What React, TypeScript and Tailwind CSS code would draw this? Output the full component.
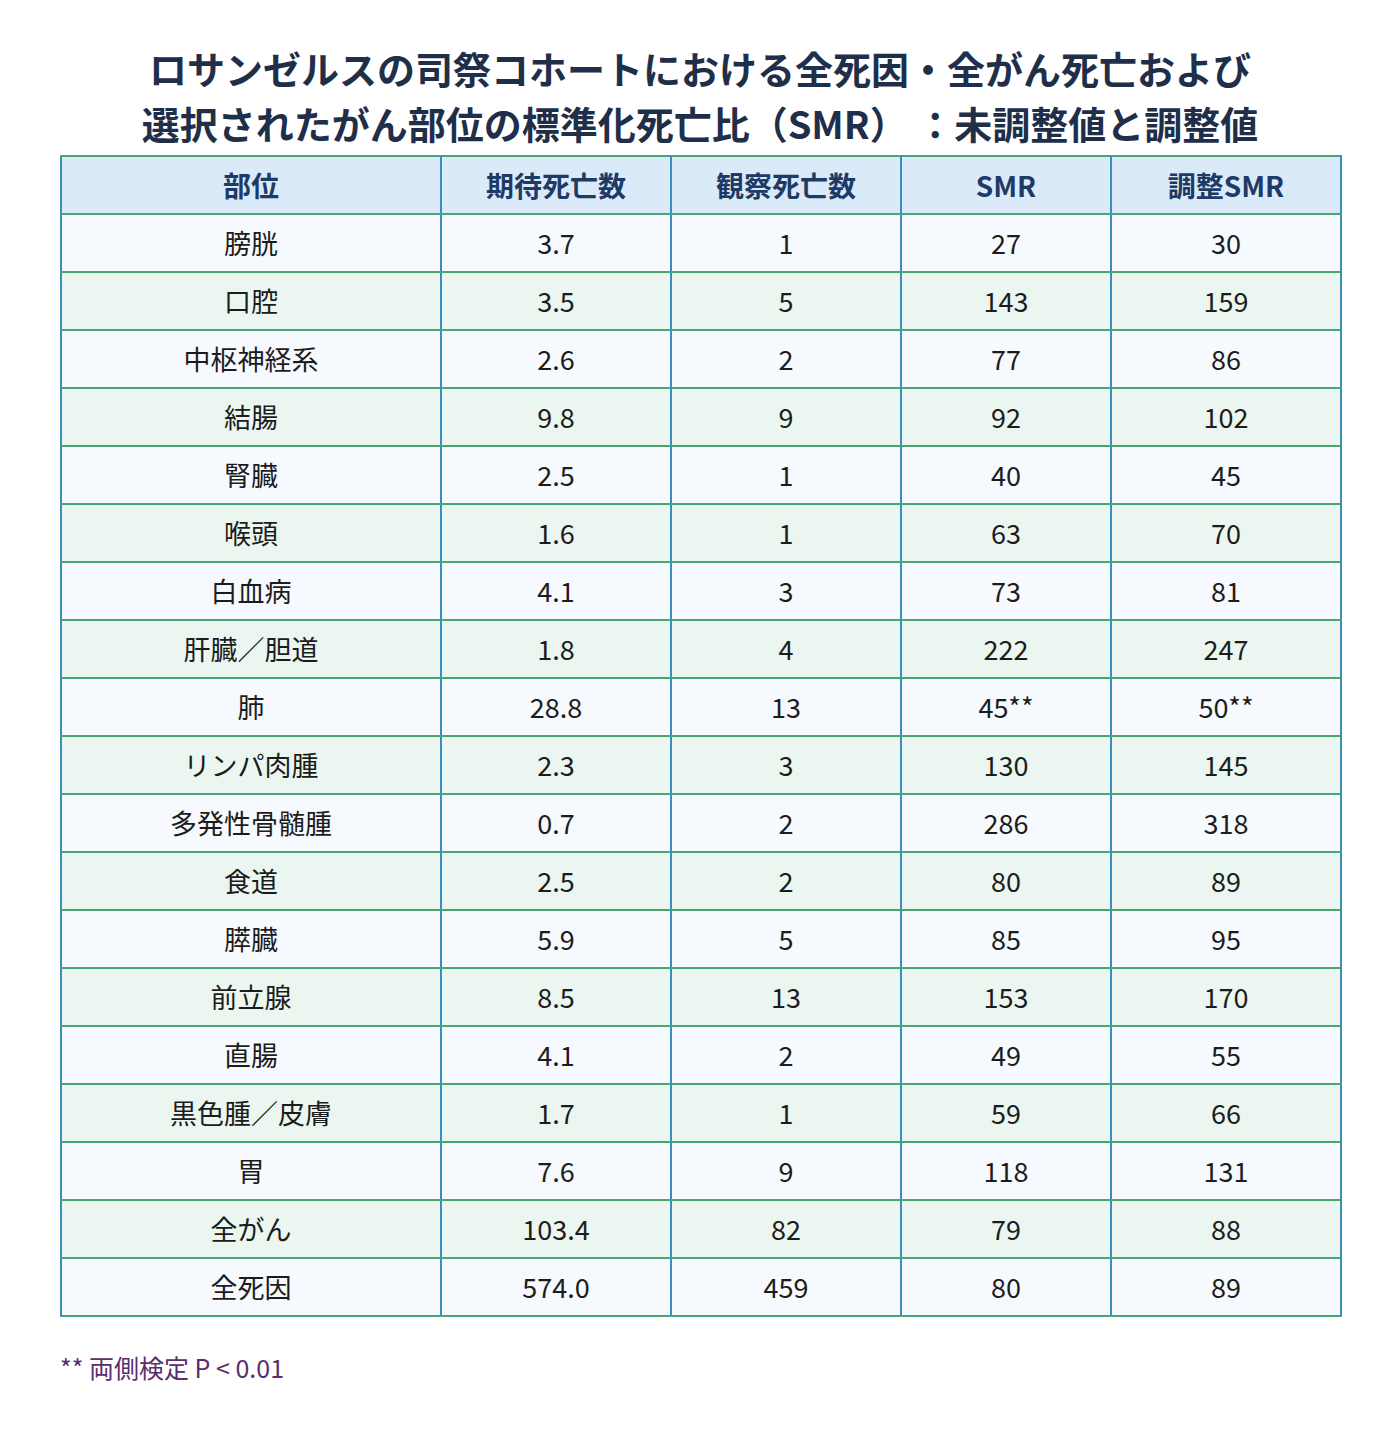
import React from 'react';

const rows: [string, string, string, string, string][] = [
  ['膀胱', '3.7', '1', '27', '30'],
  ['口腔', '3.5', '5', '143', '159'],
  ['中枢神経系', '2.6', '2', '77', '86'],
  ['結腸', '9.8', '9', '92', '102'],
  ['腎臓', '2.5', '1', '40', '45'],
  ['喉頭', '1.6', '1', '63', '70'],
  ['白血病', '4.1', '3', '73', '81'],
  ['肝臓／胆道', '1.8', '4', '222', '247'],
  ['肺', '28.8', '13', '45**', '50**'],
  ['リンパ肉腫', '2.3', '3', '130', '145'],
  ['多発性骨髄腫', '0.7', '2', '286', '318'],
  ['食道', '2.5', '2', '80', '89'],
  ['膵臓', '5.9', '5', '85', '95'],
  ['前立腺', '8.5', '13', '153', '170'],
  ['直腸', '4.1', '2', '49', '55'],
  ['黒色腫／皮膚', '1.7', '1', '59', '66'],
  ['胃', '7.6', '9', '118', '131'],
  ['全がん', '103.4', '82', '79', '88'],
  ['全死因', '574.0', '459', '80', '89'],
];

const headers = ['部位', '期待死亡数', '観察死亡数', 'SMR', '調整SMR'];
const widths = ['w-[380px]', 'w-[230px]', 'w-[230px]', 'w-[210px]', 'w-[230px]'];

const cell = 'h-[58px] p-0 text-center align-middle border-x-2 border-x-[#3a8dc0] border-y-2 border-y-[#46a676]';

export default function App() {
  return (
    <div
      className="w-[1400px] min-h-[1450px] bg-white pt-[40px]"
      style={{ fontFamily: '"Noto Sans CJK JP", "Noto Sans", sans-serif' }}
    >
      <h1 className="text-center text-[38px] leading-[55px] font-bold text-[#1f2f4a]">
        ロサンゼルスの司祭コホートにおける全死因・全がん死亡および
        <br />
        選択されたがん部位の標準化死亡比（SMR） ：未調整値と調整値
      </h1>

      <div className="px-[60px] mt-[5px]">
        <table className="w-[1280px] table-fixed border-collapse">
          <colgroup>
            {widths.map((w, i) => (
              <col key={i} className={w} />
            ))}
          </colgroup>
          <thead>
            <tr className="bg-[#dbeaf8]">
              {headers.map(h => (
                <th key={h} className={`${cell} text-[28px] font-bold text-[#1e3a66]`}>
                  {h}
                </th>
              ))}
            </tr>
          </thead>
          <tbody>
            {rows.map((r, i) => (
              <tr key={r[0]} className={i % 2 === 0 ? 'bg-[#f6f9fd]' : 'bg-[#eaf6ef]'}>
                {r.map((v, j) => (
                  <td key={j} className={`${cell} text-[27px] text-[#1c1c1c]`}>
                    {v}
                  </td>
                ))}
              </tr>
            ))}
          </tbody>
        </table>

        <p className="mt-[32px] text-[25px] leading-[37px] text-[#5a2d6e]">** 両側検定 P &lt; 0.01</p>
      </div>
    </div>
  );
}
